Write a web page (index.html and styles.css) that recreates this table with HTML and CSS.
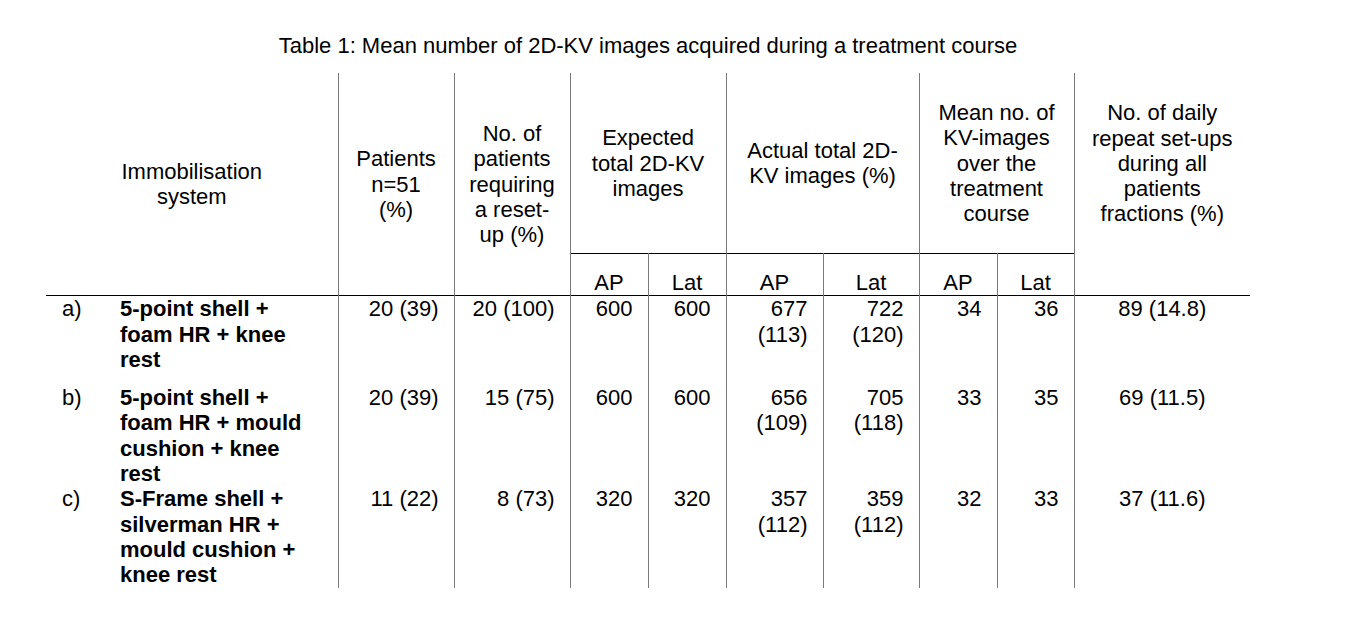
FILE: index.html
```html
<!DOCTYPE html>
<html lang="en">
<head>
<meta charset="utf-8">
<title>Table 1</title>
<link rel="stylesheet" href="styles.css">
</head>
<body>
<div class="doc">
  <div class="title">Table 1: Mean number of 2D-KV images acquired during a treatment course</div>
  <table class="kv">
    <colgroup>
      <col class="w-label">
      <col class="w-desc">
      <col class="w-pat">
      <col class="w-pat">
      <col class="w-exp">
      <col class="w-exp">
      <col class="w-act1">
      <col class="w-act2">
      <col class="w-mean1">
      <col class="w-mean2">
      <col class="w-daily">
    </colgroup>
    <thead>
      <tr class="h1">
        <th colspan="2" rowspan="2" class="vr">Immobilisation<br>system</th>
        <th rowspan="2" class="vr">Patients<br>n=51<br>(%)</th>
        <th rowspan="2" class="vr">No. of<br>patients<br>requiring<br>a reset-<br>up (%)</th>
        <th colspan="2" class="vr">Expected<br>total 2D-KV<br>images</th>
        <th colspan="2" class="vr">Actual total 2D-<br>KV images (%)</th>
        <th colspan="2" class="vr">Mean no. of<br>KV-images<br>over the<br>treatment<br>course</th>
        <th>No. of daily<br>repeat set-ups<br>during all<br>patients<br>fractions (%)</th>
      </tr>
      <tr class="h2">
        <th class="sub vr">AP</th>
        <th class="sub vr">Lat</th>
        <th class="sub vr">AP</th>
        <th class="sub vr">Lat</th>
        <th class="sub vr">AP</th>
        <th class="sub vr">Lat</th>
        <th class="blank"></th>
      </tr>
    </thead>
    <tbody>
      <tr class="ra">
        <td class="lbl">a)</td>
        <td class="desc vr">5-point shell +<br>foam HR + knee<br>rest</td>
        <td class="num vr">20 (39)</td>
        <td class="num vr">20 (100)</td>
        <td class="num vr">600</td>
        <td class="num vr">600</td>
        <td class="num vr">677<br>(113)</td>
        <td class="num vr">722<br>(120)</td>
        <td class="num vr">34</td>
        <td class="num vr">36</td>
        <td class="ctr">89 (14.8)</td>
      </tr>
      <tr>
        <td class="lbl">b)</td>
        <td class="desc vr">5-point shell +<br>foam HR + mould<br>cushion + knee<br>rest</td>
        <td class="num vr">20 (39)</td>
        <td class="num vr">15 (75)</td>
        <td class="num vr">600</td>
        <td class="num vr">600</td>
        <td class="num vr">656<br>(109)</td>
        <td class="num vr">705<br>(118)</td>
        <td class="num vr">33</td>
        <td class="num vr">35</td>
        <td class="ctr">69 (11.5)</td>
      </tr>
      <tr>
        <td class="lbl">c)</td>
        <td class="desc vr">S-Frame shell +<br>silverman HR +<br>mould cushion +<br>knee rest</td>
        <td class="num vr">11 (22)</td>
        <td class="num vr">8 (73)</td>
        <td class="num vr">320</td>
        <td class="num vr">320</td>
        <td class="num vr">357<br>(112)</td>
        <td class="num vr">359<br>(112)</td>
        <td class="num vr">32</td>
        <td class="num vr">33</td>
        <td class="ctr">37 (11.6)</td>
      </tr>
    </tbody>
  </table>
</div>
</body>
</html>
```

FILE: styles.css
```css
html, body {
  margin: 0;
  padding: 0;
  background: #ffffff;
}

body {
  font-family: "Liberation Sans", Arial, sans-serif;
  font-size: 22px;
  line-height: 25.3px;
  color: #000000;
}

.doc {
  width: 1204px;
  margin: 0 0 0 46px;
  padding-top: 33px;
}

.title {
  text-align: center;
  margin-bottom: 15px;
  white-space: nowrap;
}

.kv {
  width: 1204px;
  table-layout: fixed;
  border-collapse: collapse;
  border-spacing: 0;
}

.w-label { width: 59px; }
.w-desc { width: 233px; }
.w-pat { width: 116px; }
.w-exp { width: 78px; }
.w-act1 { width: 97px; }
.w-act2 { width: 96px; }
.w-mean1 { width: 78px; }
.w-mean2 { width: 77px; }
.w-daily { width: 176px; }

.kv th,
.kv td {
  padding: 0;
  font-weight: normal;
  white-space: nowrap;
}

.kv th {
  text-align: center;
  vertical-align: middle;
}

.kv .vr {
  border-right: 1px solid #7a7a7a;
}

.kv .h1 th {
  height: 180px;
}

.kv .h2 th {
  height: 41px;
  vertical-align: bottom;
}

.kv .h2 .sub {
  border-top: 1px solid #000000;
}

.kv tbody tr:first-child td {
  border-top: 1px solid #000000;
}

.kv td {
  vertical-align: top;
}

.kv .ra td {
  padding-bottom: 13px;
}

.kv .lbl {
  text-align: left;
  padding-left: 16px;
}

.kv .desc {
  text-align: left;
  padding-left: 15px;
  font-weight: bold;
}

.kv .num {
  text-align: right;
  padding-right: 15px;
}

.kv .ctr {
  text-align: center;
}
```
